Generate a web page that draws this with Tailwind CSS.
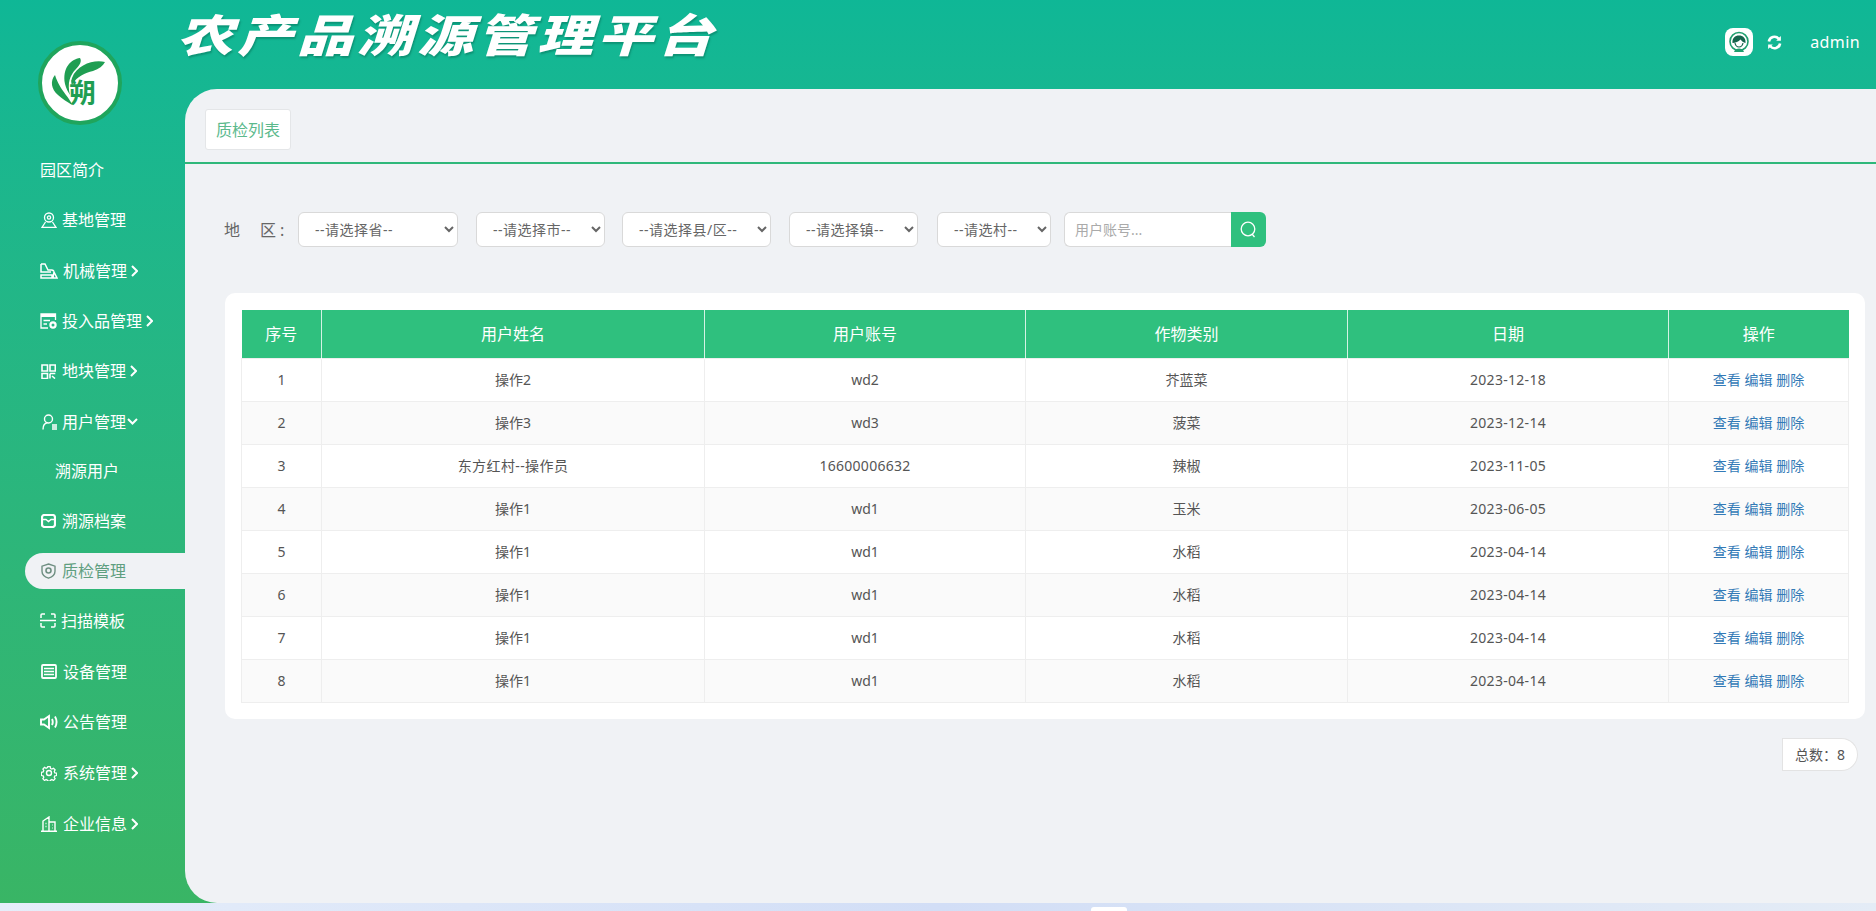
<!DOCTYPE html>
<html lang="zh-CN">
<head>
    <meta charset="UTF-8">
    <meta name="viewport" content="width=device-width, initial-scale=1.0">
    <title>农产品溯源管理平台</title>
    <script src="https://cdn.jsdelivr.net/npm/@tailwindcss/browser@4"></script>
</head>
<body class="relative h-[911px] overflow-hidden bg-[#e4edf8] font-['Noto_Sans','Noto_Sans_CJK_SC',sans-serif]">

    <div class="flex h-[903px] bg-gradient-to-b from-[#0fb796] to-[#39b565]">

        <!-- sidebar -->
        <aside class="w-[185px] shrink-0 text-white text-[16px]">
            <div class="h-[145px] pt-[41px] pl-[38px]">
                <div class="relative w-[84px] h-[84px] rounded-full bg-white border-[4px] border-[#1fa55c] overflow-hidden">
                    <svg class="absolute left-0 top-0 w-[76px] h-[76px]" viewBox="0 0 76 76">
                        <path d="M13 30c-5 6-4 14 3 20 4 4 10 7 14 10-2-8-12-14-17-30z" fill="#1f9e52"/>
                        <path d="M38 13c-9 1-18 10-15 26 1 4 3 8 5 11-3-12 0-20 6-26 4-4 6-8 4-11z" fill="#1f9e52"/>
                        <path d="M63 17c-10-3-28 2-33 16-1 3-1 5 0 7 5-9 13-12 21-14 6-2 10-5 12-9z" fill="#1f9e52"/>
                    </svg>
                    <span class="absolute left-[27px] top-[31px] text-[27px] leading-[34px] font-bold text-[#1f9e52]">朔</span>
                </div>
            </div>

            <nav>
                <a class="h-[50.3px] flex items-center pl-[40px]">园区简介</a>

                <a class="h-[50.3px] flex items-center pl-[41px]">
                    <svg class="w-[16px] h-[16px] mr-[5px]" viewBox="0 0 16 16" fill="none" stroke="currentColor" stroke-width="1.3"><circle cx="8" cy="5.5" r="4.5"/><circle cx="8" cy="5.5" r="1.6"/><path d="M4.5 10 1 15.4h14L11.500 10"/></svg>
                    基地管理
                </a>

                <a class="h-[50.3px] flex items-center pl-[40px]">
                    <svg class="w-[18px] h-[16px] mr-[5px]" viewBox="0 0 18 16" fill="none" stroke="currentColor" stroke-width="1.5"><path d="M1 1h4l3 6h4l2 1M1 1v8h10M1 12h11v3H1zM14 9l3 6h-4z"/></svg>
                    机械管理
                    <svg class="w-[7px] h-[12px] ml-[4px]" viewBox="0 0 7 12" fill="none" stroke="currentColor" stroke-width="2"><path d="m1 1 5 5-5 5"/></svg>
                </a>

                <a class="h-[50.3px] flex items-center pl-[40px]">
                    <svg class="w-[17px] h-[16px] mr-[5px]" viewBox="0 0 17 16" fill="none" stroke="currentColor" stroke-width="1.3"><path d="M15.500 7V1H1v14h7"/><path d="M1 2.500h14.500" stroke-width="3"/><path d="M3.500 7.500H10M3.500 11H7"/><circle cx="13" cy="12" r="2.600" stroke-width="2.200"/></svg>
                    投入品管理
                    <svg class="w-[7px] h-[12px] ml-[4px]" viewBox="0 0 7 12" fill="none" stroke="currentColor" stroke-width="2"><path d="m1 1 5 5-5 5"/></svg>
                </a>

                <a class="h-[50.3px] flex items-center pl-[41px]">
                    <svg class="w-[15px] h-[15px] mr-[6px]" viewBox="0 0 15 15" fill="none" stroke="currentColor" stroke-width="1.600"><path d="M1 1h5.500v6H1zM9 1h5.300v6H9zM1 9.500h5.500v5H1zM9 9.500h5.300M9 9.500v5M11 12l3 2.500"/></svg>
                    地块管理
                    <svg class="w-[7px] h-[12px] ml-[4px]" viewBox="0 0 7 12" fill="none" stroke="currentColor" stroke-width="2"><path d="m1 1 5 5-5 5"/></svg>
                </a>

                <a class="h-[50.3px] flex items-center pl-[42px]">
                    <svg class="w-[15px] h-[16px] mr-[5px]" viewBox="0 0 15 16" fill="none" stroke="currentColor" stroke-width="1.400"><circle cx="6.500" cy="5" r="4"/><path d="M1 15.500c0-4 2-6.500 4.500-6.800M10 11h5M10 13h5M10 15h5"/></svg>
                    用户管理
                    <svg class="w-[11px] h-[7px] ml-[1px]" viewBox="0 0 11 7" fill="none" stroke="currentColor" stroke-width="2"><path d="m1 1 4.500 4.500L10 1"/></svg>
                </a>

                <a class="h-[49.3px] flex items-center pl-[55px]">溯源用户</a>

                <a class="h-[49.3px] flex items-center pl-[41px]">
                    <svg class="w-[15px] h-[14px] mr-[6px]" viewBox="0 0 15 14" fill="none" stroke="currentColor" stroke-width="2.200"><rect x="1" y="1" width="13" height="12" rx="2.500"/><path d="M1.500 5.500h3.500l2.500 2 2.500-2h3.500" stroke-width="1.400"/></svg>
                    溯源档案
                </a>

                <a class="relative h-[36px] my-[7.15px] ml-[25px] flex items-center pl-[16px] rounded-l-full bg-[#f0f2f5] text-[#5f9f80]">
                    <svg class="w-[15px] h-[16px] mr-[6px]" viewBox="0 0 15 16" fill="none" stroke="#6f8f82" stroke-width="1.400"><path d="M7.500 1 14 3.200v5c0 3.500-3 5.800-6.500 7C4 14 1 11.700 1 8.200v-5z"/><circle cx="7.500" cy="7.500" r="2.500" stroke-width="1.600"/></svg>
                    质检管理
                </a>

                <a class="h-[50.3px] flex items-center pl-[40px]">
                    <svg class="w-[16px] h-[15px] mr-[5px]" viewBox="0 0 16 15" fill="none" stroke="currentColor" stroke-width="1.500"><path d="M1 5V2a1 1 0 0 1 1-1h3M11 1h3a1 1 0 0 1 1 1v3M1 10v3a1 1 0 0 0 1 1h3M11 14h3a1 1 0 0 0 1-1v-3M0 7.500h16"/></svg>
                    扫描模板
                </a>

                <a class="h-[51.3px] flex items-center pl-[41px]">
                    <svg class="w-[16px] h-[15px] mr-[6px]" viewBox="0 0 16 15" fill="none" stroke="currentColor" stroke-width="1.800"><rect x="1" y="1" width="14" height="13" rx="1"/><path d="M3 4.500h10M3 7.500h10M3 10.500h10" stroke-width="1.500"/></svg>
                    设备管理
                </a>

                <a class="h-[50.3px] flex items-center pl-[40px]">
                    <svg class="w-[18px] h-[16px] mr-[5px]" viewBox="0 0 18 16" fill="none" stroke="currentColor" stroke-width="1.900"><path d="M1 5.500h3L9 2v12L4 10.500H1z"/><path d="M12 5c1 2 1 4 0 6M15 2.500c2 3.500 2 7.500 0 11"/></svg>
                    公告管理
                </a>

                <a class="h-[51.3px] flex items-center pl-[41px]">
                    <svg class="w-[16px] h-[16px] mr-[6px]" viewBox="0 0 16 16" fill="none" stroke="currentColor" stroke-width="1.400"><circle cx="8" cy="8" r="2.500"/><path d="M6.700 1h2.600l.4 2 1.500.7 1.800-1 1.800 1.900-1 1.700.7 1.500 2 .4v2.600l-2 .4-.7 1.500 1 1.700-1.800 1.900-1.800-1-1.500.7-.4 1h-2.600l-.4-1-1.500-.7-1.800 1-1.800-1.900 1-1.700-.7-1.500-2-.4V7.200l2-.4.7-1.500-1-1.700L3 1.700l1.800 1 1.500-.7z" transform="translate(.8 .8) scale(.9)"/></svg>
                    系统管理
                    <svg class="w-[7px] h-[12px] ml-[4px]" viewBox="0 0 7 12" fill="none" stroke="currentColor" stroke-width="2"><path d="m1 1 5 5-5 5"/></svg>
                </a>

                <a class="h-[50.3px] flex items-center pl-[41px]">
                    <svg class="w-[16px] h-[16px] mr-[6px]" viewBox="0 0 16 16" fill="none" stroke="currentColor" stroke-width="1.400"><path d="M0 15.300h16M2 15V5l6-4v14M8 6h6v9M4.500 7.500h1M4.500 10.500h1M11 9h.5M11 12h.5"/></svg>
                    企业信息
                    <svg class="w-[7px] h-[12px] ml-[4px]" viewBox="0 0 7 12" fill="none" stroke="currentColor" stroke-width="2"><path d="m1 1 5 5-5 5"/></svg>
                </a>
            </nav>
        </aside>

        <div class="flex-1 flex flex-col min-w-0">

            <!-- top bar -->
            <header class="h-[89px] shrink-0 flex items-start text-white">
                <h1 class="ml-[-8px] mt-[1px] origin-top-left scale-y-[0.8] text-[56px] leading-[80px] font-black italic tracking-[4px] whitespace-nowrap font-['Noto_Sans_CJK_SC',sans-serif] [text-shadow:1px_2px_2px_rgba(0,80,60,0.35)]">农产品溯源管理平台</h1>
                <div class="ml-auto flex items-center mt-[28px]">
                    <div class="w-[28px] h-[28px] rounded-[8px] bg-white flex items-center justify-center">
                        <svg class="w-[22px] h-[22px]" viewBox="0 0 22 22" fill="none"><circle cx="11" cy="10.500" r="9" stroke="#1f9e6e" stroke-width="1.600"/><path d="M4.500 12C4 7 7 4.500 11 4.500s7 2.500 6.500 7.500c-2-.5-4-2-5-3.500-2 2-5 3.500-8 3.500z" fill="#17634c"/><path d="M7 12c.5 2.500 2 4 4 4s3.500-1.500 4-4" stroke="#17634c" stroke-width="1.200"/><path d="M6 21c1-3 3-3.500 5-3.500s4 .5 5 3.500z" fill="#1f9e6e"/></svg>
                    </div>
                    <svg class="w-[15px] h-[15px] ml-[14px]" viewBox="0 0 16 16" fill="none" stroke="currentColor" stroke-width="2.800"><path d="M2 7a6 6 0 0 1 10.500-3M14 9a6 6 0 0 1-10.500 3"/><path d="M14.800 1v5h-5zM1.200 15v-5h5z" fill="currentColor" stroke="none"/></svg>
                    <span class="ml-[28px] mr-[16px] text-[16px] tracking-[0.4px]">admin</span>
                </div>
            </header>

            <!-- content -->
            <main class="flex-1 min-h-0 rounded-l-[32px] bg-[#f0f2f5] text-[14px] text-[#555]">

                <div class="h-[75px] border-b-2 border-[#2fb87a] pt-[20px] pl-[20px]">
                    <div class="w-[86px] h-[41px] flex items-center justify-center bg-white border border-[#e4e6e8] rounded-[3px] text-[16px] text-[#5bb98c]">质检列表</div>
                </div>

                <div class="flex items-center h-[35px] mt-[48px] ml-[39px]">
                    <label class="w-[74px] text-[16px] text-[#666] whitespace-nowrap">地<span class="inline-block w-[20px]"></span>区<span class="ml-[4px]">:</span></label>
                    <select class="w-[160px] h-[35px] pl-[12px] pr-[8px] bg-white border border-[#d9d9d9] rounded-[6px] text-[#666] tracking-[0.5px]"><option>--请选择省--</option></select>
                    <select class="w-[129px] h-[35px] ml-[18px] pl-[12px] pr-[4px] bg-white border border-[#d9d9d9] rounded-[6px] text-[#666] tracking-[0.5px]"><option>--请选择市--</option></select>
                    <select class="w-[149px] h-[35px] ml-[17px] pl-[12px] pr-[4px] bg-white border border-[#d9d9d9] rounded-[6px] text-[#666] tracking-[0.5px]"><option>--请选择县/区--</option></select>
                    <select class="w-[129px] h-[35px] ml-[18px] pl-[12px] pr-[4px] bg-white border border-[#d9d9d9] rounded-[6px] text-[#666] tracking-[0.5px]"><option>--请选择镇--</option></select>
                    <select class="w-[114px] h-[35px] ml-[19px] pl-[12px] pr-[4px] bg-white border border-[#d9d9d9] rounded-[6px] text-[#666] tracking-[0.5px]"><option>--请选村--</option></select>
                    <div class="flex ml-[13px]">
                        <input class="w-[167px] h-[35px] px-[10px] bg-white border border-r-0 border-[#d9d9d9] rounded-l-[6px] placeholder:text-[#aaa]" placeholder="用户账号...">
                        <button class="w-[35px] h-[35px] flex items-center justify-center bg-[#2fc07e] rounded-r-[6px]">
                            <svg class="w-[17px] h-[17px]" viewBox="0 0 17 17" fill="none" stroke="white" stroke-width="1.300"><circle cx="8" cy="8" r="6.800"/><path d="m12 13 2.500 3"/></svg>
                        </button>
                    </div>
                </div>

                <div class="mt-[46px] ml-[40px] mr-[11px] py-[17px] pl-[16px] pr-[17px] pb-[16px] bg-white rounded-[10px]">
                    <table class="w-[1607px] table-fixed border-collapse text-center">
                        <colgroup>
                            <col class="w-[80px]"><col class="w-[383px]"><col class="w-[321px]"><col class="w-[322px]"><col class="w-[321px]"><col class="w-[180px]">
                        </colgroup>
                        <thead class="bg-[#2fc07e] text-white text-[16px] font-normal">
                            <tr class="h-[48px]">
                                <th class="font-normal border-r border-white/80">序号</th>
                                <th class="font-normal border-r border-white/80">用户姓名</th>
                                <th class="font-normal border-r border-white/80">用户账号</th>
                                <th class="font-normal border-r border-white/80">作物类别</th>
                                <th class="font-normal border-r border-white/80">日期</th>
                                <th class="font-normal">操作</th>
                            </tr>
                        </thead>
                        <tbody>
                            <tr class="h-[43px]">
                                <td class="border border-[#eee]">1</td><td class="border border-[#eee]">操作2</td><td class="border border-[#eee]">wd2</td><td class="border border-[#eee]">芥蓝菜</td><td class="border border-[#eee] tracking-[0.3px]">2023-12-18</td>
                                <td class="border border-[#eee] text-[#337ab7]">查看 编辑 删除</td>
                            </tr>
                            <tr class="h-[43px] bg-[#fafafa]">
                                <td class="border border-[#eee]">2</td><td class="border border-[#eee]">操作3</td><td class="border border-[#eee]">wd3</td><td class="border border-[#eee]">菠菜</td><td class="border border-[#eee] tracking-[0.3px]">2023-12-14</td>
                                <td class="border border-[#eee] text-[#337ab7]">查看 编辑 删除</td>
                            </tr>
                            <tr class="h-[43px]">
                                <td class="border border-[#eee]">3</td><td class="border border-[#eee] tracking-[0.4px]">东方红村--操作员</td><td class="border border-[#eee] tracking-[0.25px]">16600006632</td><td class="border border-[#eee]">辣椒</td><td class="border border-[#eee] tracking-[0.3px]">2023-11-05</td>
                                <td class="border border-[#eee] text-[#337ab7]">查看 编辑 删除</td>
                            </tr>
                            <tr class="h-[43px] bg-[#fafafa]">
                                <td class="border border-[#eee]">4</td><td class="border border-[#eee]">操作1</td><td class="border border-[#eee]">wd1</td><td class="border border-[#eee]">玉米</td><td class="border border-[#eee] tracking-[0.3px]">2023-06-05</td>
                                <td class="border border-[#eee] text-[#337ab7]">查看 编辑 删除</td>
                            </tr>
                            <tr class="h-[43px]">
                                <td class="border border-[#eee]">5</td><td class="border border-[#eee]">操作1</td><td class="border border-[#eee]">wd1</td><td class="border border-[#eee]">水稻</td><td class="border border-[#eee] tracking-[0.3px]">2023-04-14</td>
                                <td class="border border-[#eee] text-[#337ab7]">查看 编辑 删除</td>
                            </tr>
                            <tr class="h-[43px] bg-[#fafafa]">
                                <td class="border border-[#eee]">6</td><td class="border border-[#eee]">操作1</td><td class="border border-[#eee]">wd1</td><td class="border border-[#eee]">水稻</td><td class="border border-[#eee] tracking-[0.3px]">2023-04-14</td>
                                <td class="border border-[#eee] text-[#337ab7]">查看 编辑 删除</td>
                            </tr>
                            <tr class="h-[43px]">
                                <td class="border border-[#eee]">7</td><td class="border border-[#eee]">操作1</td><td class="border border-[#eee]">wd1</td><td class="border border-[#eee]">水稻</td><td class="border border-[#eee] tracking-[0.3px]">2023-04-14</td>
                                <td class="border border-[#eee] text-[#337ab7]">查看 编辑 删除</td>
                            </tr>
                            <tr class="h-[43px] bg-[#fafafa]">
                                <td class="border border-[#eee]">8</td><td class="border border-[#eee]">操作1</td><td class="border border-[#eee]">wd1</td><td class="border border-[#eee]">水稻</td><td class="border border-[#eee] tracking-[0.3px]">2023-04-14</td>
                                <td class="border border-[#eee] text-[#337ab7]">查看 编辑 删除</td>
                            </tr>
                        </tbody>
                    </table>
                </div>

                <div class="flex justify-end mt-[19px] mr-[18px]">
                    <div class="h-[33px] w-[76px] flex items-center justify-center bg-white border border-[#e3e3e3] rounded-l-[10px] rounded-r-full">总数：8</div>
                </div>
            </main>
        </div>
    </div>

    <!-- strip of the desktop behind the window -->
    <div class="h-[8px] bg-gradient-to-r from-[#e6eefa] via-[#d2def6] to-[#e4ecf6]"></div>
    <div class="absolute left-[1091px] bottom-0 w-[36px] h-[4px] rounded-t-[3px] bg-white"></div>

</body>
</html>
